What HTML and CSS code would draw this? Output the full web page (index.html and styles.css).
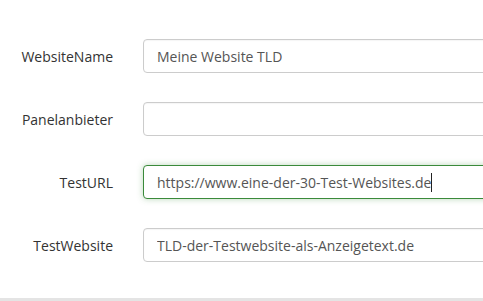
FILE: index.html
```html
<!DOCTYPE html>
<html lang="de">
<head>
    <meta charset="UTF-8">
    <meta name="viewport" content="width=device-width, initial-scale=1.0">
    <title>Website Einstellungen</title>
    <link rel="stylesheet" href="styles.css">
</head>
<body>
    <div class="panel">
        <form class="settings-form">
            <div class="form-row">
                <label for="websiteName">WebsiteName</label>
                <input type="text" id="websiteName" value="Meine Website TLD">
            </div>
            <div class="form-row">
                <label for="panelProvider">Panelanbieter</label>
                <input type="text" id="panelProvider" value="">
            </div>
            <div class="form-row">
                <label for="testUrl">TestURL</label>
                <div class="input-wrap">
                    <input type="text" id="testUrl" class="is-valid" value="https://www.eine-der-30-Test-Websites.de">
                    <span class="caret"></span>
                </div>
            </div>
            <div class="form-row">
                <label for="testWebsite">TestWebsite</label>
                <input type="text" id="testWebsite" value="TLD-der-Testwebsite-als-Anzeigetext.de">
            </div>
        </form>
    </div>
    <div class="panel-footer"></div>
</body>
</html>
```

FILE: styles.css
```css
:root {
    --text-color: #333;
    --input-text: #555;
    --border: #cccccc;
    --valid: #3a8a3a;
    --footer: #e4e4e4;
}

* {
    margin: 0;
    padding: 0;
    box-sizing: border-box;
}

html, body {
    height: 100%;
    overflow: hidden;
}

body {
    font-family: 'Open Sans', 'Noto Sans', sans-serif;
    font-size: 14px;
    color: var(--text-color);
    background: #fff;
    display: flex;
    flex-direction: column;
}

.panel {
    flex: 1;
    padding-top: 39px;
    overflow: hidden;
}

.settings-form {
    display: flex;
    flex-direction: column;
    gap: 29px;
}

.form-row {
    display: grid;
    grid-template-columns: 113px 1fr;
    column-gap: 30px;
    align-items: center;
}

.form-row label {
    text-align: right;
    color: var(--text-color);
}

.form-row input {
    width: calc(100% + 20px);
    height: 34px;
    padding: 0 13px;
    border: 1px solid var(--border);
    border-radius: 4px;
    font-family: inherit;
    font-size: 14px;
    color: var(--input-text);
    background: #fff;
    outline: none;
    box-shadow: inset 0 1px 1px rgba(0,0,0,0.04);
}

.input-wrap {
    position: relative;
}

.input-wrap input {
    width: calc(100% + 20px);
}

.form-row input.is-valid {
    border-color: var(--valid);
    box-shadow: 0 0 6px rgba(60,141,60,0.35);
}

/* text cursor after the typed url */
.caret {
    position: absolute;
    left: 288px;
    top: 8px;
    width: 1px;
    height: 19px;
    background: #222;
}

.panel-footer {
    height: 3px;
    background: var(--footer);
}
```
